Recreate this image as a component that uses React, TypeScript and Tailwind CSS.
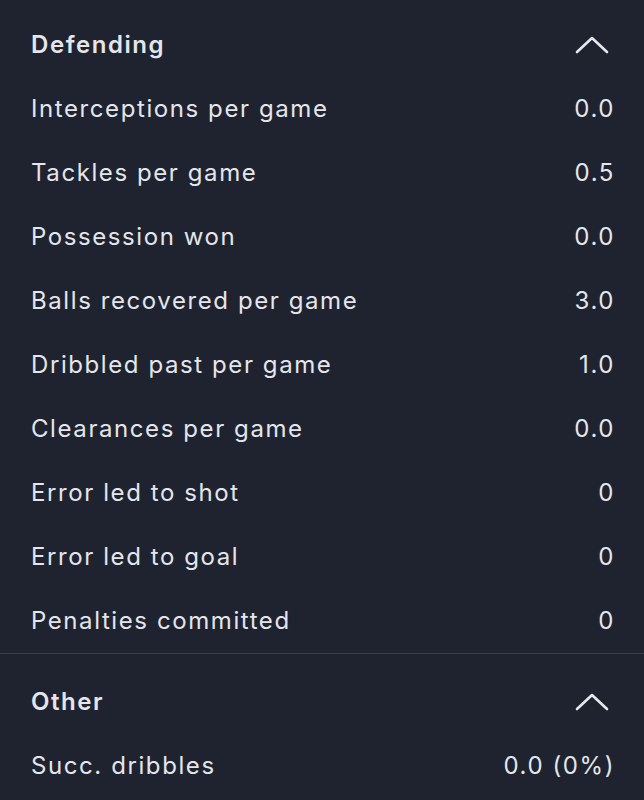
import React from "react"

type Stat = { label: string; value: string }

const defending: Stat[] = [
  { label: "Interceptions per game", value: "0.0" },
  { label: "Tackles per game", value: "0.5" },
  { label: "Possession won", value: "0.0" },
  { label: "Balls recovered per game", value: "3.0" },
  { label: "Dribbled past per game", value: "1.0" },
  { label: "Clearances per game", value: "0.0" },
  { label: "Error led to shot", value: "0" },
  { label: "Error led to goal", value: "0" },
  { label: "Penalties committed", value: "0" },
]

const other: Stat[] = [{ label: "Succ. dribbles", value: "0.0 (0%)" }]

function ChevronUp() {
  return (
    <svg width="34" height="20" viewBox="0 0 34 20" fill="none" className="mr-[6px] text-[#e6e8ee]">
      <path d="M2 17 L17 3 L32 17" stroke="currentColor" strokeWidth="2.6" strokeLinecap="round" strokeLinejoin="round" />
    </svg>
  )
}

function Section({ title, stats, className }: { title: string; stats: Stat[]; className?: string }) {
  return (
    <section className={className}>
      <div className="flex h-16 items-center justify-between">
        <h3 className="text-[24px] font-semibold tracking-[0.065em]">{title}</h3>
        <ChevronUp />
      </div>
      {stats.map((s) => (
        <div key={s.label} className="flex h-16 items-center justify-between">
          <span>{s.label}</span>
          <span>{s.value}</span>
        </div>
      ))}
    </section>
  )
}

export default function App() {
  return (
    <div
      className="h-[800px] w-full overflow-hidden bg-[#1f2330] text-[24px] tracking-[0.066em] text-[#e4e6ec]"
      style={{ fontFamily: "Inter, 'Noto Sans', sans-serif" }}
    >
      <Section title="Defending" stats={defending} className="pl-[31px] pr-[29px] pt-[13px]" />
      <div className="h-px bg-[#3a3f4b]" />
      <Section title="Other" stats={other} className="pl-[31px] pr-[29px] pt-4" />
    </div>
  )
}
